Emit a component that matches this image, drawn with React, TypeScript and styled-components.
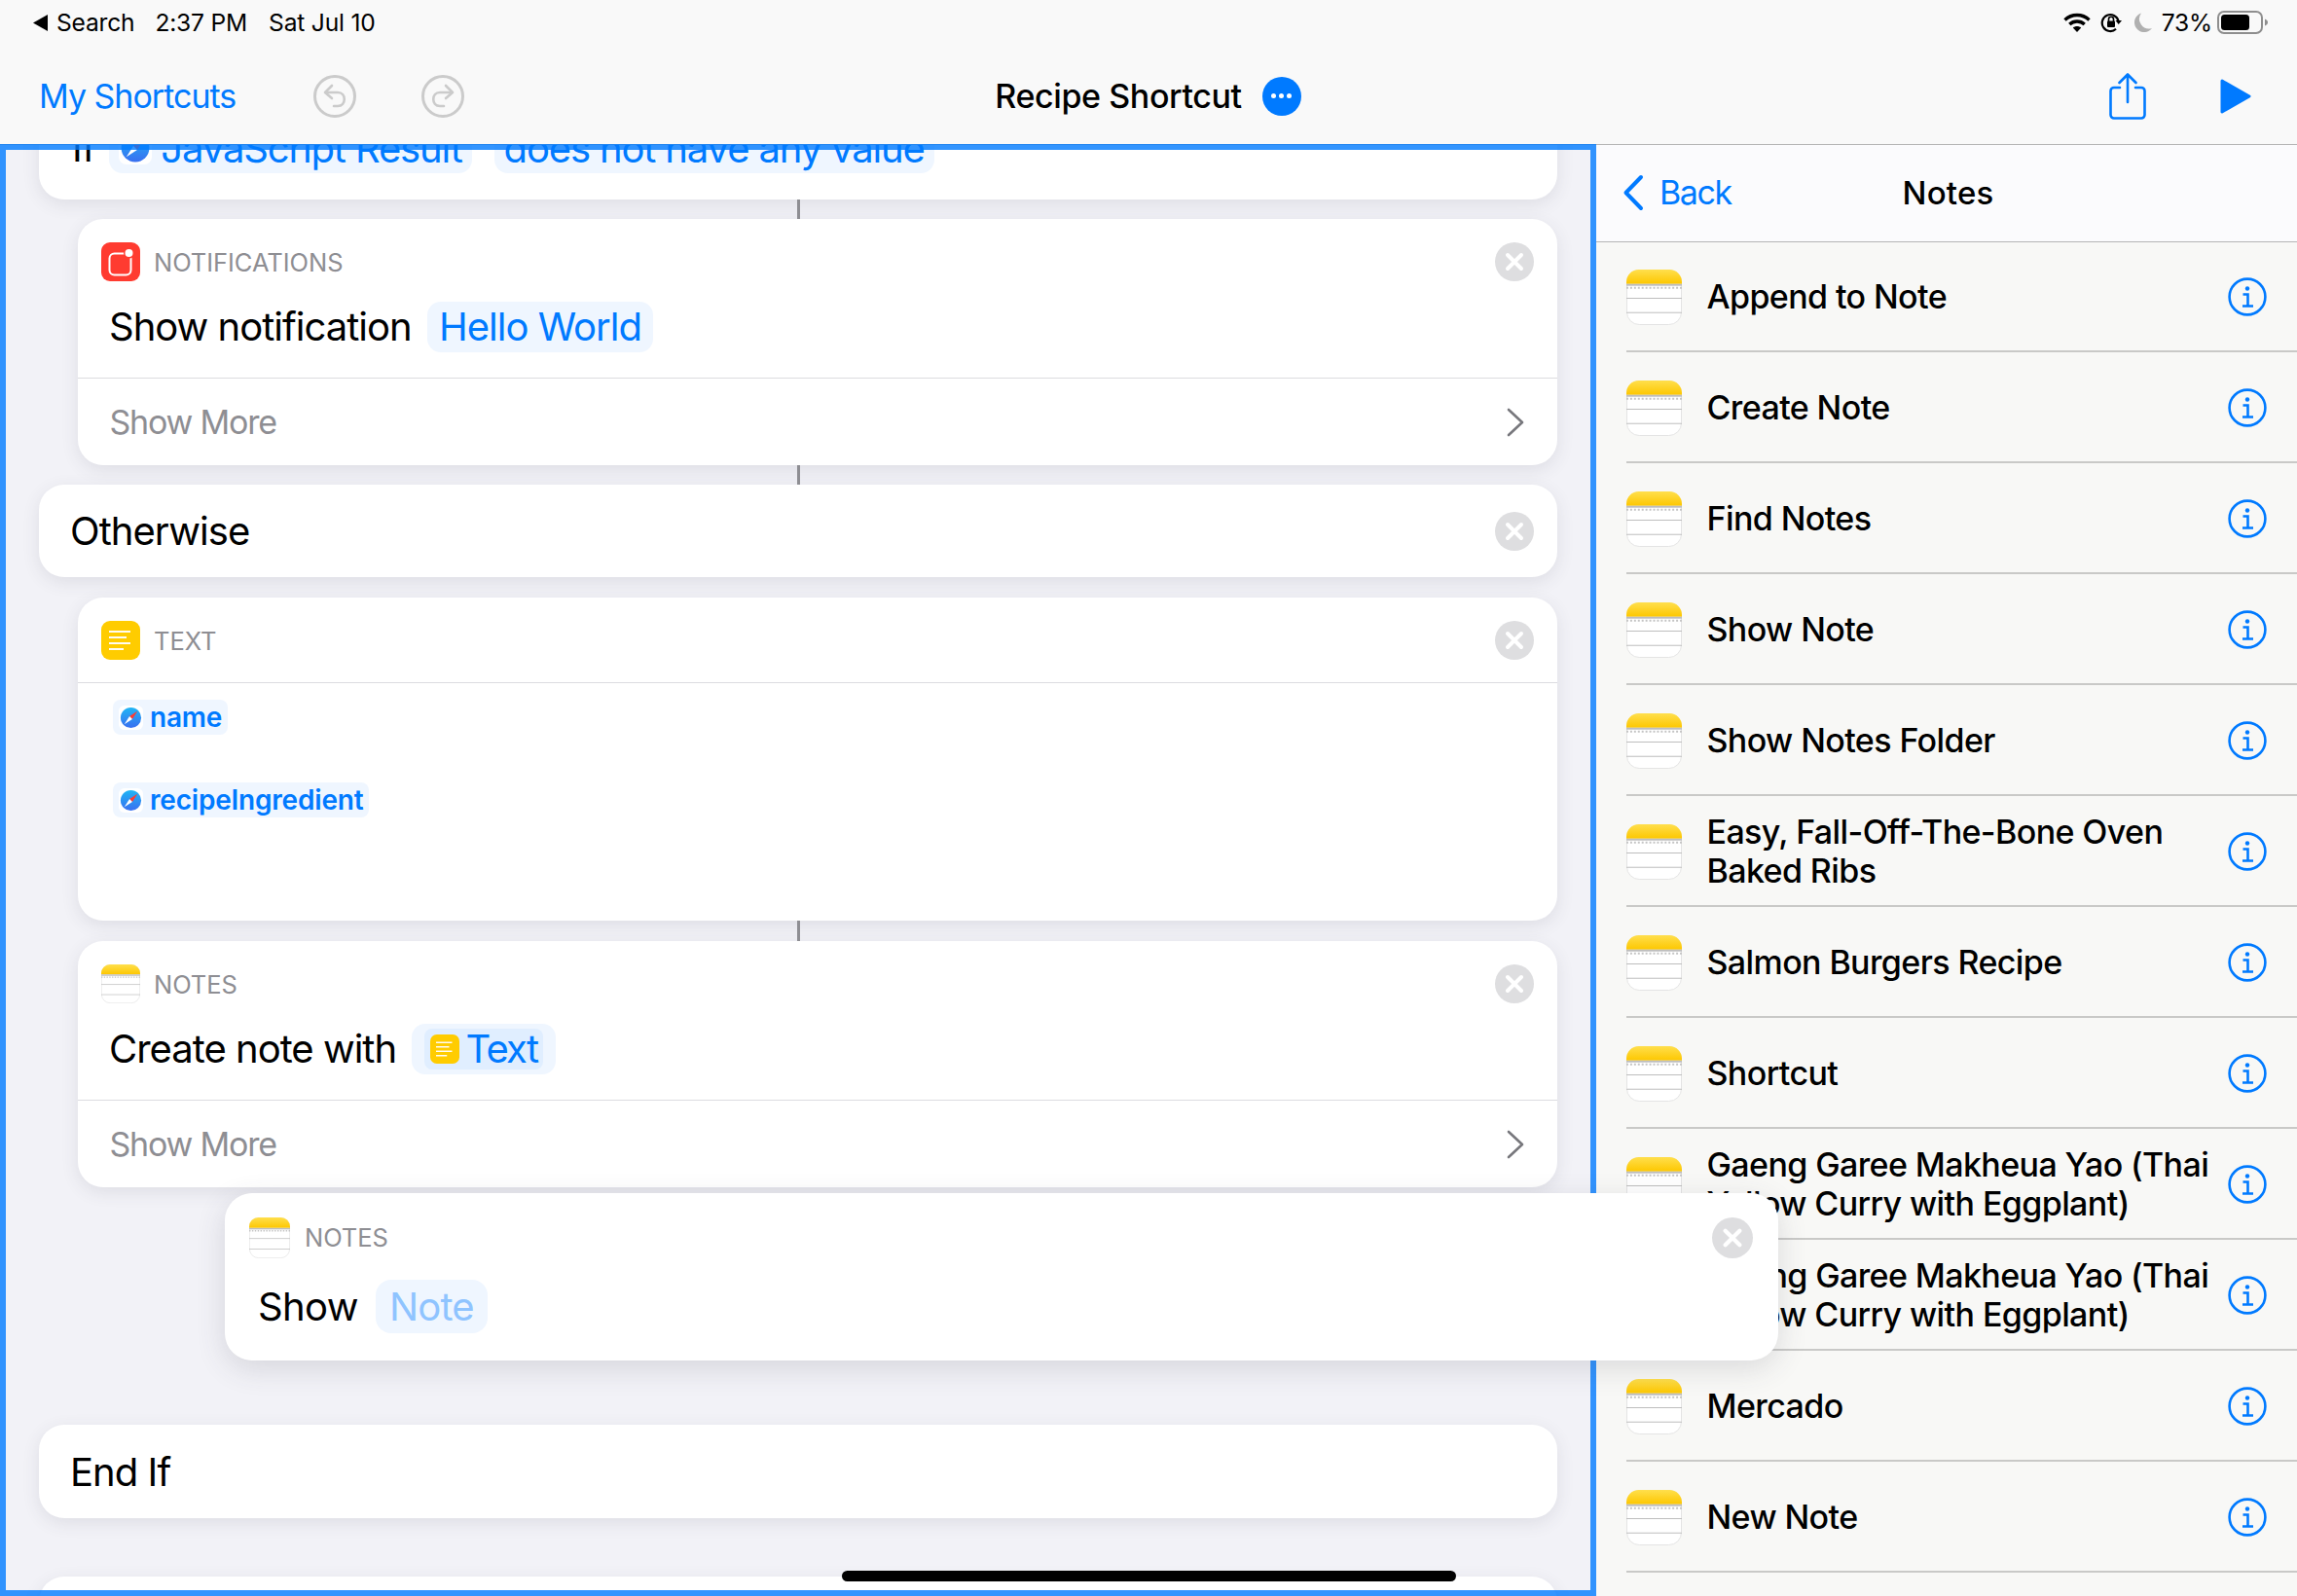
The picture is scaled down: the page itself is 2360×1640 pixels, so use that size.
import React from "react";
import styled, { createGlobalStyle } from "styled-components";

const Global = createGlobalStyle`
  html, body { margin: 0; padding: 0; background: #f2f2f7; }
  body { font-family: Inter, "Noto Sans", "Liberation Sans", sans-serif; -webkit-font-smoothing: antialiased; }
`;

const Screen = styled.div`
  width: 2360px; height: 1640px; position: relative; overflow: hidden;
  display: flex; flex-direction: column;
`;
const TopBar = styled.header`
  height: 149px; box-sizing: border-box; flex: none;
  background: #f9f9f9; border-bottom: 1px solid #b5b5b5;
  display: flex; flex-direction: column;
`;
const StatusRow = styled.div`
  height: 46px; flex: none; box-sizing: border-box; padding: 0 30px 0 34px;
  display: flex; align-items: center; justify-content: space-between;
  font-size: 24.6px; letter-spacing: -0.2px; color: #000;
`;
const StatusLeft = styled.div`display: flex; align-items: center;`;
const StatusText = styled.span<{ $gap?: number }>`margin-left: ${p => p.$gap ?? 0}px;`;
const StatusRight = styled.div`display: flex; align-items: center;`;
const NavRow = styled.div`
  flex: 1; display: grid; grid-template-columns: 1fr auto 1fr; align-items: center;
  padding: 3px 47px 0 40px;
`;
const NavLeft = styled.div`display: flex; align-items: center;`;
const NavLink = styled.span`font-size: 34px; color: #007aff; letter-spacing: -1px; margin-right: 80px;`;
const RoundIcon = styled.span`display: flex; margin-right: 67px;`;
const NavCenter = styled.div`display: flex; align-items: center; gap: 21px; margin-left: 6px;`;
const NavTitle = styled.span`font-size: 34px; font-weight: 500; color: #000; letter-spacing: -0.4px;`;
const MoreButton = styled.span`
  width: 40px; height: 40px; border-radius: 50%; background: #007aff;
  display: flex; align-items: center; justify-content: center; gap: 3px;
`;
const MoreDot = styled.i`width: 5px; height: 5px; border-radius: 50%; background: #fff; display: block;`;
const NavRight = styled.div`display: flex; align-items: center; justify-content: flex-end; gap: 76px;`;

const Main = styled.main`flex: 1; display: flex; min-height: 0;`;
const Pane = styled.section`
  width: 1640px; flex: none; position: relative; z-index: 2; background: #f2f2f7;
`;
const Scroll = styled.div`
  height: 100%; overflow: hidden; box-sizing: border-box; padding: 0 40px;
  display: flex; flex-direction: column;
`;
const Focus = styled.div`
  position: absolute; left: 0; right: 0; top: -1px; bottom: 0; pointer-events: none; z-index: 3;
  border: 6px solid rgba(0, 122, 255, 0.8);
`;
const Card = styled.div<{ $indent?: boolean }>`
  background: #fff; border-radius: 26px; flex: none;
  margin-left: ${p => (p.$indent ? 40 : 0)}px;
  box-shadow: 0 5px 18px rgba(60, 60, 80, 0.11);
`;
const IfCard = styled(Card)`
  height: 96px; margin-top: -40px; box-sizing: border-box; padding: 17px 0 0 34px;
  display: flex; align-items: flex-start; overflow: hidden;
`;
const IfWord = styled.span`font-size: 40px; line-height: 52px; color: #000; letter-spacing: -0.6px; margin-right: 14px;`;
const Connector = styled.div<{ $h?: number }>`
  flex: none; width: 3px; height: ${p => p.$h ?? 20}px; align-self: center; background: #8e8e93; position: relative; z-index: 1;
`;
const Spacer = styled.div<{ $h: number }>`flex: none; height: ${p => p.$h}px;`;
const CardHead = styled.div<{ $rule?: boolean }>`
  height: ${p => (p.$rule ? 88 : 64)}px; box-sizing: border-box; padding: 24px 24px 0 24px;
  display: flex; align-items: flex-start; gap: 14px;
  border-bottom: ${p => (p.$rule ? "1px solid #dcdce0" : "none")};
`;
const Label = styled.span`
  font-size: 25.5px; line-height: 42px; color: #8e8e93; flex: 1; letter-spacing: -0.05px;
`;
const Phrase = styled.div`
  display: flex; align-items: center; gap: 16px; height: 100px; box-sizing: border-box;
  padding: 0 0 6px 32px; border-bottom: 1px solid #dcdce0;
`;
const PhraseText = styled.span`font-size: 40px; color: #000; letter-spacing: -1px;`;
const Chip = styled.span`
  height: 52px; box-sizing: border-box; padding: 0 12.5px; border-radius: 14px; background: #eff6ff;
  display: inline-flex; align-items: center; color: #007aff; font-size: 40px; letter-spacing: -1px;
`;
const IfChip = styled(Chip)`gap: 9px; padding: 0 10px; letter-spacing: -1.15px; margin-right: 23px;`;
const ChipInner = styled.span`
  height: 42px; box-sizing: border-box; padding: 0 6px; border-radius: 8px; background: #e0eeff;
  display: inline-flex; align-items: center; gap: 7px; letter-spacing: -1.8px;
`;
const MoreRow = styled.div`
  height: 89px; box-sizing: border-box; padding: 0 33px 0 32.5px;
  display: flex; align-items: center; justify-content: space-between;
  font-size: 34px; letter-spacing: -1.2px; color: #8e8e93;
`;
const PlainRow = styled.div<{ $h: number }>`
  height: ${p => p.$h}px; box-sizing: border-box; padding: 0 24px 0 32px;
  display: flex; align-items: center; justify-content: space-between;
  font-size: 40px; color: #000; letter-spacing: -0.95px;
`;
const TextBody = styled.div`height: 244px; box-sizing: border-box; padding: 17px 0 0 36px; display: flex; flex-direction: column; align-items: flex-start; gap: 49px;`;
const MiniChip = styled.span`
  height: 36px; box-sizing: border-box; padding: 0 6px; border-radius: 8px; background: #eff6ff;
  display: inline-flex; align-items: center; gap: 7px; color: #007aff; font-size: 28px; font-weight: 600; letter-spacing: -0.2px;
`;
const Dragged = styled.div`
  position: absolute; z-index: 4; left: 231px; top: 1077px; width: 1596px; height: 172px;
  background: #fff; border-radius: 28px; box-shadow: 0 8px 30px rgba(60, 60, 80, 0.16);
`;
const DraggedHead = styled.div`
  height: 68px; box-sizing: border-box; padding: 25px 26px 0 25px; display: flex; align-items: flex-start; gap: 15px;
`;
const DraggedBody = styled.div`
  display: flex; align-items: center; gap: 18px; padding: 21px 0 0 34px;
`;
const DraggedChip = styled(Chip)`height: 55px; padding: 0 14px; font-size: 40px; color: #8fc4ff; border-radius: 16px; letter-spacing: -0.8px;`;
const DraggedWord = styled(PhraseText)`letter-spacing: -0.6px;`;
const HomeBar = styled.div`
  position: absolute; z-index: 5; left: 865px; top: 1614px; width: 631px; height: 11px; border-radius: 6px; background: #000;
`;

const Side = styled.aside`flex: 1; background: #f8f8f6; display: flex; flex-direction: column; overflow: hidden;`;
const SideHead = styled.div`
  height: 99px; box-sizing: border-box; flex: none; background: #fbfbfd; position: relative; z-index: 1; box-shadow: 0 1px 0 #b5b5b5;
  display: grid; grid-template-columns: 1fr auto 1fr; align-items: center; padding: 0 27px 2px;
`;
const Back = styled.span`
  display: flex; align-items: center; gap: 16px; font-size: 34px; color: #007aff; letter-spacing: -1.4px;
`;
const SideTitle = styled.span`font-size: 33px; font-weight: 500; color: #000; letter-spacing: 0.2px; margin-left: 3px;`;
const List = styled.div`display: flex; flex-direction: column;`;
const Row = styled.div`
  height: 114px; flex: none; box-sizing: border-box; margin-left: 31px; padding: 2px 31px 0 0;
  display: flex; align-items: center; border-bottom: 2px solid #c9c9c7;
`;
const RowText = styled.span`
  flex: 1; margin: 0 10px 0 25.5px; font-size: 34px; line-height: 40px; font-weight: 500; color: #000; letter-spacing: -0.6px;
`;
const Svg = styled.svg<{ $m?: number }>`display: block; flex: none; margin-left: ${p => p.$m ?? 0}px;`;

const NotesIcon = ({ size }: { size: number }) => (
  <Svg width={size} height={size} viewBox="0 0 58 58">
    <defs>
      <linearGradient id="ny" x1="0" y1="0" x2="0" y2="1">
        <stop offset="0" stopColor="#ffdf4d" />
        <stop offset="1" stopColor="#fdc700" />
      </linearGradient>
    </defs>
    <rect x=".5" y=".5" width="57" height="57" rx="13" fill="#fff" stroke="#e3e3e3" />
    <path d="M0 15V13A13 13 0 0 1 13 0H45A13 13 0 0 1 58 13V15Z" fill="url(#ny)" />
    <rect y="15" width="58" height="2" fill="#bdbdbd" />
    <line x1="0" x2="58" y1="19" y2="19" stroke="#c4c4c4" strokeWidth="2" strokeDasharray="2 2" />
    <rect y="29.5" width="58" height="1" fill="#bdbdbd" />
    <rect y="44.5" width="58" height="1" fill="#bdbdbd" />
  </Svg>
);
const TextIcon = ({ size }: { size: number }) => (
  <Svg width={size} height={size} viewBox="0 0 40 40">
    <rect width="40" height="40" rx="9" fill="#ffcc00" />
    <g stroke="#fff" strokeWidth="2" opacity=".95">
      <line x1="8" x2="30" y1="11" y2="11" />
      <line x1="8" x2="26" y1="17" y2="17" />
      <line x1="8" x2="30" y1="23" y2="23" />
      <line x1="8" x2="23" y1="29" y2="29" />
    </g>
  </Svg>
);
const NotifyIcon = () => (
  <Svg width={40} height={40} viewBox="0 0 40 40">
    <rect width="40" height="40" rx="9" fill="#ff3b30" />
    <rect x="8.5" y="11.5" width="22" height="22" rx="5" fill="none" stroke="#fff" strokeWidth="2" />
    <circle cx="28.5" cy="11" r="5.5" fill="#ff3b30" />
    <circle cx="28.5" cy="11" r="4" fill="#fff" />
  </Svg>
);
const SafariIcon = ({ size }: { size: number }) => (
  <Svg width={size} height={size} viewBox="0 0 26 26">
    <defs>
      <linearGradient id="sf" x1="0" y1="0" x2="0" y2="1">
        <stop offset="0" stopColor="#1fb6f5" />
        <stop offset="1" stopColor="#3a6ff0" />
      </linearGradient>
    </defs>
    <rect width="26" height="26" rx="6" fill="#fff" />
    <circle cx="13" cy="13" r="11" fill="url(#sf)" />
    <path d="M20 6L11.5 11.5L14.5 14.5Z" fill="#ff3b30" />
    <path d="M6 20L11.5 11.5L14.5 14.5Z" fill="#fff" />
  </Svg>
);
const CloseIcon = ({ size = 40 }: { size?: number }) => (
  <Svg width={size} height={size} viewBox="0 0 40 40">
    <circle cx="20" cy="20" r="20" fill="#dedee0" />
    <path d="M13 13L27 27M27 13L13 27" stroke="#fff" strokeWidth="4" strokeLinecap="round" />
  </Svg>
);
const Chevron = () => (
  <Svg width={20} height={30} viewBox="0 0 20 30">
    <path d="M3 2L17 15L3 28" fill="none" stroke="#77777c" strokeWidth="2.6" strokeLinecap="round" strokeLinejoin="round" />
  </Svg>
);
const InfoIcon = () => (
  <Svg width={40} height={40} viewBox="0 0 40 40">
    <circle cx="20" cy="20" r="18.4" fill="none" stroke="#007aff" strokeWidth="2.6" />
    <circle cx="20" cy="11.5" r="2.2" fill="#007aff" />
    <path d="M15.5 17.5H20.5V29M15 29.5H26" fill="none" stroke="#007aff" strokeWidth="2.6" />
  </Svg>
);
const Wifi = () => (
  <Svg width={28} height={20} viewBox="0 0 28 20">
    <path d="M1.5 7.5C8.5 .8 19.5 .8 26.5 7.5" fill="none" stroke="#000" strokeWidth="3.4" />
    <path d="M6.3 12C10.6 8 17.4 8 21.7 12" fill="none" stroke="#000" strokeWidth="3.4" />
    <path d="M9.8 15.4C12.2 13.4 15.8 13.4 18.2 15.4L14 20Z" fill="#000" />
  </Svg>
);
const OrientLock = () => (
  <Svg width={22} height={22} viewBox="0 0 22 22" $m={10}>
    <path d="M18.5 9.5A8.5 8.5 0 1 0 16 17.8" fill="none" stroke="#000" strokeWidth="2.2" />
    <path d="M15.5 9H22L18.7 13Z" fill="#000" />
    <rect x="7" y="9.5" width="8" height="6.5" rx="1" fill="#000" />
    <path d="M8.5 10V7.8A2.5 2.5 0 0 1 13.5 7.8V10" fill="none" stroke="#000" strokeWidth="1.6" />
  </Svg>
);
const Moon = () => (
  <Svg width={18} height={20} viewBox="0 0 18 20" $m={13}>
    <path d="M7 .5A10 10 0 0 0 18 16A10 10 0 1 1 7 .5Z" fill="#b0b0b0" />
  </Svg>
);
const Battery = () => (
  <Svg width={52} height={24} viewBox="0 0 52 24" $m={5}>
    <rect x="1" y="1" width="45" height="22" rx="6" fill="none" stroke="#8e8e8e" strokeWidth="2" />
    <rect x="4" y="4" width="29" height="16" rx="3.5" fill="#000" />
    <path d="M49 8.5C51 9.3 52 10.5 52 12S51 14.7 49 15.5Z" fill="#8e8e8e" />
  </Svg>
);
const Undo = ({ flip }: { flip?: boolean }) => (
  <Svg width={44} height={44} viewBox="0 0 44 44">
    <circle cx="22" cy="22" r="20.5" fill="none" stroke="#cbcbcb" strokeWidth="3" />
    <g transform={flip ? "matrix(-1 0 0 1 44 0)" : undefined} fill="none" stroke="#cbcbcb" strokeWidth="2.6" strokeLinecap="round" strokeLinejoin="round">
      <path d="M19 11L12 18L19 24" />
      <path d="M13 18H25C34 18 34 32 25 32H21" />
    </g>
  </Svg>
);
const Share = () => (
  <Svg width={38} height={48} viewBox="0 0 38 48">
    <g fill="none" stroke="#007aff" strokeWidth="2.6" strokeLinecap="round" strokeLinejoin="round">
      <path d="M11 15H5A3.5 3.5 0 0 0 1.5 18.5V43A3.5 3.5 0 0 0 5 46.5H33A3.5 3.5 0 0 0 36.5 43V18.5A3.5 3.5 0 0 0 33 15H27" />
      <path d="M19 30V2M10.5 10L19 1.5L27.5 10" />
    </g>
  </Svg>
);
const Play = () => (
  <Svg width={32} height={36} viewBox="0 0 32 36">
    <path d="M2 2L30 18L2 34Z" fill="#007aff" stroke="#007aff" strokeWidth="3" strokeLinejoin="round" />
  </Svg>
);
const BackTriangle = () => (
  <Svg width={15} height={17} viewBox="0 0 15 17">
    <path d="M15 0V17L0 8.5Z" fill="#000" />
  </Svg>
);
const BackChevron = () => (
  <Svg width={22} height={38} viewBox="0 0 22 38">
    <path d="M19 3L3.5 19L19 35" fill="none" stroke="#007aff" strokeWidth="4" strokeLinecap="round" strokeLinejoin="round" />
  </Svg>
);

const notes = [
  "Append to Note", "Create Note", "Find Notes", "Show Note", "Show Notes Folder",
  "Easy, Fall-Off-The-Bone Oven Baked Ribs", "Salmon Burgers Recipe", "Shortcut",
  "Gaeng Garee Makheua Yao (Thai Yellow Curry with Eggplant)",
  "Gaeng Garee Makheua Yao (Thai Yellow Curry with Eggplant)",
  "Mercado", "New Note",
];

export default function App() {
  return (
    <Screen>
      <Global />
      <TopBar>
        <StatusRow>
          <StatusLeft>
            <BackTriangle />
            <StatusText $gap={9}>Search</StatusText>
            <StatusText $gap={21}>2:37 PM</StatusText>
            <StatusText $gap={22}>Sat Jul 10</StatusText>
          </StatusLeft>
          <StatusRight>
            <Wifi />
            <OrientLock />
            <Moon />
            <StatusText $gap={10}>73%</StatusText>
            <Battery />
          </StatusRight>
        </StatusRow>
        <NavRow>
          <NavLeft>
            <NavLink>My Shortcuts</NavLink>
            <RoundIcon><Undo /></RoundIcon>
            <RoundIcon><Undo flip /></RoundIcon>
          </NavLeft>
          <NavCenter>
            <NavTitle>Recipe Shortcut</NavTitle>
            <MoreButton><MoreDot /><MoreDot /><MoreDot /></MoreButton>
          </NavCenter>
          <NavRight>
            <Share />
            <Play />
          </NavRight>
        </NavRow>
      </TopBar>
      <Main>
        <Pane>
          <Scroll>
            <IfCard>
              <IfWord>If</IfWord>
              <IfChip><SafariIcon size={34} />JavaScript Result</IfChip>
              <IfChip>does not have any value</IfChip>
            </IfCard>
            <Connector />
            <Card $indent>
              <CardHead>
                <NotifyIcon />
                <Label>NOTIFICATIONS</Label>
                <CloseIcon />
              </CardHead>
              <Phrase>
                <PhraseText>Show notification</PhraseText>
                <Chip>Hello World</Chip>
              </Phrase>
              <MoreRow>Show More<Chevron /></MoreRow>
            </Card>
            <Connector />
            <Card>
              <PlainRow $h={95}>Otherwise<CloseIcon /></PlainRow>
            </Card>
            <Spacer $h={21} />
            <Card $indent>
              <CardHead $rule>
                <TextIcon size={40} />
                <Label>TEXT</Label>
                <CloseIcon />
              </CardHead>
              <TextBody>
                <MiniChip><SafariIcon size={25} />name</MiniChip>
                <MiniChip><SafariIcon size={25} />recipeIngredient</MiniChip>
              </TextBody>
            </Card>
            <Connector $h={21} />
            <Card $indent>
              <CardHead>
                <NotesIcon size={40} />
                <Label>NOTES</Label>
                <CloseIcon />
              </CardHead>
              <Phrase>
                <PhraseText>Create note with</PhraseText>
                <Chip>
                  <ChipInner><TextIcon size={30} />Text</ChipInner>
                </Chip>
              </Phrase>
              <MoreRow>Show More<Chevron /></MoreRow>
            </Card>
            <Spacer $h={244} />
            <Card>
              <PlainRow $h={96}>End If</PlainRow>
            </Card>
            <Spacer $h={60} />
            <Card><PlainRow $h={96} /></Card>
          </Scroll>
          <Focus />
          <Dragged>
            <DraggedHead>
              <NotesIcon size={42} />
              <Label>NOTES</Label>
              <CloseIcon size={42} />
            </DraggedHead>
            <DraggedBody>
              <DraggedWord>Show</DraggedWord>
              <DraggedChip>Note</DraggedChip>
            </DraggedBody>
          </Dragged>
        </Pane>
        <Side>
          <SideHead>
            <Back><BackChevron />Back</Back>
            <SideTitle>Notes</SideTitle>
          </SideHead>
          <List>
            {notes.map((n, i) => (
              <Row key={i}>
                <NotesIcon size={57} />
                <RowText>{n}</RowText>
                <InfoIcon />
              </Row>
            ))}
          </List>
        </Side>
      </Main>
      <HomeBar />
    </Screen>
  );
}
